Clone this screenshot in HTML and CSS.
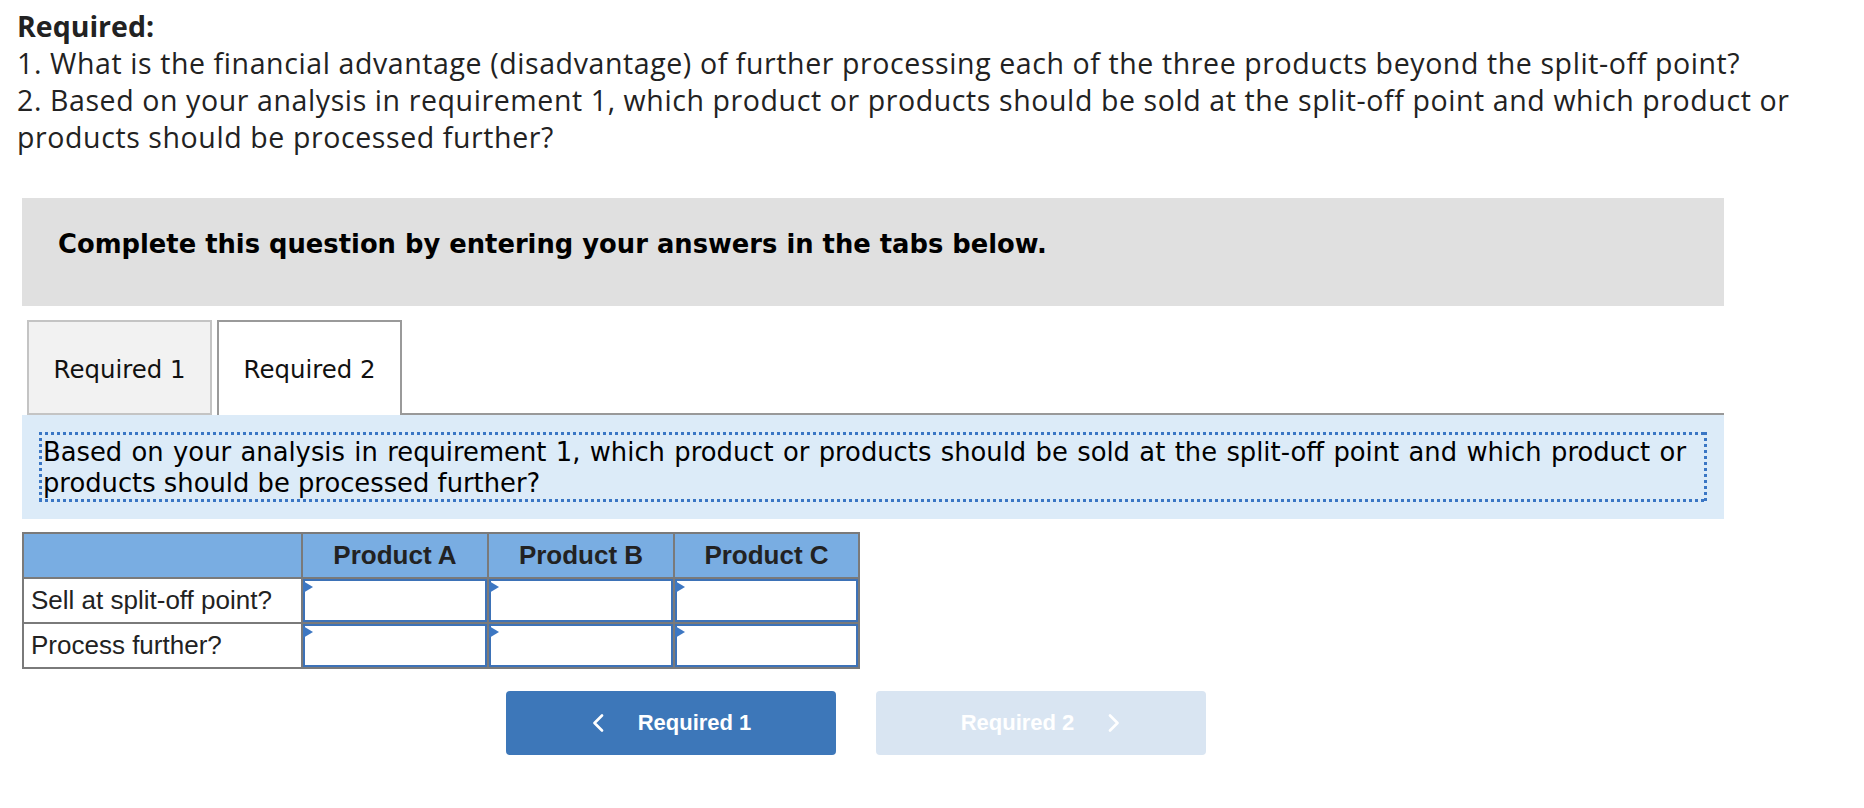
FILE: index.html
```html
<!DOCTYPE html>
<html lang="en">
<head>
<meta charset="utf-8">
<title>Required</title>
<link rel="stylesheet" href="styles.css">
</head>
<body>
<div class="page">
  <div class="intro">
    <div class="req-title">Required:</div>
    <div>1. What is the financial advantage (disadvantage) of further processing each of the three products beyond the split-off point?</div>
    <div>2. Based on your analysis in requirement 1, which product or products should be sold at the split-off point and which product or products should be processed further?</div>
  </div>

  <div class="instructions">Complete this question by entering your answers in the tabs below.</div>

  <div class="tabs">
    <div class="tab">Required 1</div>
    <div class="tab active">Required 2</div>
    <div class="tab-fill"></div>
  </div>

  <div class="panel">
    <div class="prompt">Based on your analysis in requirement 1, which product or products should be sold at the split-off point and which product or products should be processed further?</div>
  </div>

  <div class="grid">
    <div class="hcell"></div>
    <div class="hcell">Product A</div>
    <div class="hcell">Product B</div>
    <div class="hcell">Product C</div>

    <div class="label">Sell at split-off point?</div>
    <div class="input"></div>
    <div class="input"></div>
    <div class="input"></div>

    <div class="label">Process further?</div>
    <div class="input"></div>
    <div class="input"></div>
    <div class="input"></div>
  </div>

  <div class="nav">
    <button class="btn prev">
      <svg class="chev" width="14" height="18" viewBox="0 0 14 18"><polyline points="11,1.5 3.5,9 11,16.5" fill="none" stroke="#fff" stroke-width="2.6" stroke-linecap="round" stroke-linejoin="round"/></svg>
      <span>Required 1</span>
    </button>
    <button class="btn next" disabled>
      <span>Required 2</span>
      <svg class="chev" width="14" height="18" viewBox="0 0 14 18"><polyline points="3,1.5 10.5,9 3,16.5" fill="none" stroke="#fff" stroke-width="2.6" stroke-linecap="round" stroke-linejoin="round"/></svg>
    </button>
  </div>
</div>
</body>
</html>
```

FILE: styles.css
```css
html, body {
  margin: 0;
  padding: 0;
  background: #ffffff;
}

.page {
  width: 1864px;
}

.intro {
  padding: 8px 17px 0 17px;
  font-family: "Open Sans", Lato, sans-serif;
  font-size: 28.5px;
  line-height: 37px;
  letter-spacing: 0.6px;
  color: #222222;
}

.req-title {
  font-weight: 700;
  letter-spacing: 0;
}

.instructions {
  margin: 42px 0 0 22px;
  width: 1702px;
  height: 108px;
  box-sizing: border-box;
  padding: 31px 0 0 36px;
  background: #e0e0e0;
  font-family: "DejaVu Sans", Verdana, sans-serif;
  font-weight: 700;
  font-size: 25.8px;
  line-height: 30px;
  color: #000000;
}

.tabs {
  display: flex;
  gap: 5px;
  margin: 14px 0 0 22px;
  width: 1702px;
  box-sizing: border-box;
  padding-left: 5px;
}

.tab {
  width: 185px;
  height: 95px;
  box-sizing: border-box;
  border: 2px solid #c4c4c4;
  background: #f2f2f2;
  display: flex;
  align-items: center;
  justify-content: center;
  padding-top: 3px;
  font-family: "DejaVu Sans", Verdana, sans-serif;
  font-size: 24.4px;
  color: #111111;
}

.tab.active {
  background: #ffffff;
  border-color: #9a9a9a;
  border-bottom: none;
  padding-top: 1px;
}

.tab-fill {
  flex: 1;
  border-bottom: 2px solid #999999;
  margin-left: -5px;
}

.panel {
  margin-left: 22px;
  width: 1702px;
  box-sizing: border-box;
  padding: 17px;
  background: #dcebf8;
}

.prompt {
  padding: 5px 21px 3px 4px;
  font-family: "DejaVu Sans", Verdana, sans-serif;
  font-size: 25.8px;
  line-height: 31px;
  color: #000000;
  text-align: justify;
  background:
    repeating-linear-gradient(90deg, #3a76c4 0 3px, transparent 3px 6px) top left / 100% 3px no-repeat,
    repeating-linear-gradient(90deg, #3a76c4 0 3px, transparent 3px 6px) bottom left / 100% 3px no-repeat,
    repeating-linear-gradient(180deg, #3a76c4 0 3px, transparent 3px 6px) top left / 3px 100% no-repeat,
    repeating-linear-gradient(180deg, #3a76c4 0 3px, transparent 3px 6px) top right / 3px 100% no-repeat;
}

.grid {
  display: grid;
  grid-template-columns: 277px 184px 184px 183px;
  grid-auto-rows: 43px;
  gap: 2px;
  padding: 2px;
  width: max-content;
  margin: 13px 0 0 22px;
  background: #7a7a7a;
  font-family: "Liberation Sans", Arial, sans-serif;
  font-size: 26px;
  color: #222222;
}

.hcell {
  background: #79ade2;
  font-weight: 700;
  display: flex;
  align-items: center;
  justify-content: center;
}

.label {
  background: #ffffff;
  display: flex;
  align-items: center;
  padding-left: 7px;
}

.input {
  position: relative;
  background: #ffffff;
  border: 2px solid #3d72b7;
}

.input::before {
  content: "";
  position: absolute;
  left: -2px;
  top: 0;
  width: 0;
  height: 0;
  border-top: 6.5px solid transparent;
  border-bottom: 6.5px solid transparent;
  border-left: 10px solid #3d77c2;
}

.nav {
  display: flex;
  justify-content: center;
  gap: 40px;
  margin: 22px 0 0 22px;
  width: 1668px;
}

.btn {
  width: 330px;
  height: 64px;
  border: none;
  border-radius: 4px;
  display: flex;
  align-items: center;
  justify-content: center;
  gap: 33px;
  padding: 0;
  font-family: "Liberation Sans", Arial, sans-serif;
  font-weight: 700;
  font-size: 22px;
  color: #ffffff;
}

.btn.prev {
  background: #3d77b9;
}

.btn.next {
  background: #d9e5f2;
}

.chev {
  display: block;
}
```
